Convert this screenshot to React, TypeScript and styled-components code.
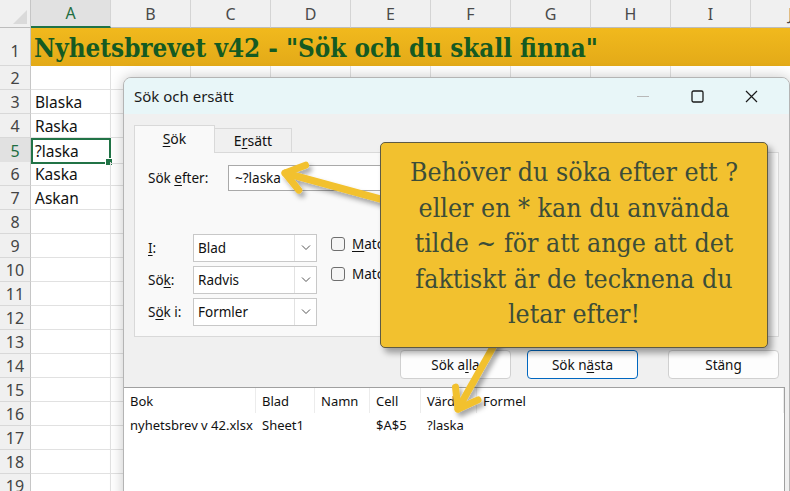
import React from 'react';
import styled, { createGlobalStyle, css } from 'styled-components';

const GlobalStyle = createGlobalStyle`
  html, body {
    margin: 0;
    padding: 0;
    background: #ffffff;
    overflow: hidden;
  }
  * { box-sizing: border-box; }
`;

const UI_FONT = `"Noto Sans", "Open Sans", Arial, sans-serif`;
const SLAB_FONT = `"DejaVu Serif", "Liberation Serif", serif`;

const Stage = styled.div`
  position: relative;
  width: 790px;
  height: 491px;
  overflow: hidden;
  font-family: ${UI_FONT};
  background: #fff;
`;

/* ---------- spreadsheet ---------- */

const Sheet = styled.div`
  display: flex;
  flex-direction: column;
  width: 831px;
`;

const SheetRow = styled.div<{ $h: number }>`
  display: grid;
  grid-template-columns: 31px repeat(10, 80px);
  height: ${(p) => p.$h}px;
`;

const Corner = styled.div`
  position: relative;
  background: #f0f0f0;
  border-right: 1px solid #c6c6c6;
  border-bottom: 1px solid #bdbdbd;
  &::after {
    content: '';
    position: absolute;
    right: 3px;
    bottom: 3px;
    border-style: solid;
    border-width: 0 0 14px 14px;
    border-color: transparent transparent #dadada transparent;
  }
`;

const ColHead = styled.div<{ $active?: boolean }>`
  display: flex;
  align-items: center;
  justify-content: center;
  font-size: 16px;
  color: #4a4a4a;
  background: #f0f0f0;
  border-right: 1px solid #d4d4d4;
  border-bottom: 1px solid #bdbdbd;
  ${(p) =>
    p.$active &&
    css`
      background: #e1e1e1;
      color: #1e6e42;
      border-bottom: 2px solid #217346;
    `}
`;

const RowHead = styled.div<{ $active?: boolean; $bottom?: boolean }>`
  display: flex;
  align-items: ${(p) => (p.$bottom ? 'flex-end' : 'center')};
  justify-content: center;
  padding-bottom: ${(p) => (p.$bottom ? '3px' : '0')};
  font-size: 16px;
  color: #444;
  background: ${(p) => (p.$active ? '#e1e1e1' : '#f0f0f0')};
  ${(p) => p.$active && 'color: #1e6e42;'}
  border-right: 1px solid #c6c6c6;
  border-bottom: 1px solid #d8d8d8;
`;

const Cell = styled.div<{ $selected?: boolean }>`
  position: relative;
  display: flex;
  align-items: center;
  padding-left: 4px;
  font-size: 15.5px;
  color: #111;
  border-right: 1px solid #e1e1e1;
  border-bottom: 1px solid #e1e1e1;
  ${(p) =>
    p.$selected &&
    css`
      border: 2px solid #217346;
      padding-left: 2px;
      &::after {
        content: '';
        position: absolute;
        right: -4px;
        bottom: -4px;
        width: 6px;
        height: 6px;
        background: #217346;
        border: 1px solid #fff;
      }
    `}
`;

const Banner = styled.div`
  grid-column: 2 / -1;
  display: flex;
  align-items: flex-end;
  padding: 0 0 3px 3px;
  background: linear-gradient(#f1b91d, #e3aa18);
  font-family: ${SLAB_FONT};
  font-weight: bold;
  font-stretch: condensed;
  font-size: 25.8px;
  color: #155a22;
  white-space: nowrap;
`;

/* ---------- dialog ---------- */

const Dialog = styled.div`
  position: absolute;
  left: 123px;
  top: 77px;
  width: 667px;
  height: 440px;
  display: flex;
  flex-direction: column;
  background: #f0f0f0;
  border: 1px solid #b4b4b4;
  border-radius: 8px 8px 0 0;
  box-shadow: 0 0 14px rgba(0, 0, 0, 0.22);
  overflow: hidden;
`;

const TitleBar = styled.div`
  height: 36px;
  flex: none;
  display: flex;
  align-items: center;
  padding: 0 11px 0 10px;
  background: #e8f6f8;
  font-size: 15px;
  color: #1a1a1a;
`;

const Title = styled.span`
  flex: 1;
`;

const WinButton = styled.div`
  width: 54px;
  height: 36px;
  display: flex;
  align-items: center;
  justify-content: center;
  color: #1a1a1a;
`;

const Body = styled.div`
  flex: 1;
  display: flex;
  flex-direction: column;
  padding: 11px 10px 0 10px;
`;

const Tabs = styled.div`
  display: flex;
  align-items: flex-end;
  height: 27px;
`;

const Tab = styled.div<{ $active?: boolean }>`
  display: flex;
  align-items: center;
  justify-content: center;
  font-size: 14px;
  color: #111;
  border: 1px solid #d9d9d9;
  border-bottom: none;
  ${(p) =>
    p.$active
      ? css`
          width: 81px;
          height: 28px;
          background: #f9f9f9;
          position: relative;
          z-index: 1;
          margin-bottom: -1px;
          padding-bottom: 2px;
        `
      : css`
          width: 77px;
          height: 24px;
          background: #f0f0f0;
          border-left: none;
        `}
`;

const U = styled.span`
  text-decoration: underline;
  text-underline-offset: 2px;
`;

const Panel = styled.div`
  height: 185px;
  padding: 12px 0 0 13px;
  background: #f9f9f9;
  border: 1px solid #d9d9d9;
  display: flex;
  flex-direction: column;
`;

const FindRow = styled.div`
  display: flex;
  align-items: center;
  height: 26px;
`;

const Label = styled.div<{ $w: number }>`
  width: ${(p) => p.$w}px;
  flex: none;
  font-size: 13.5px;
  color: #111;
`;

const TextInput = styled.div`
  width: 480px;
  height: 26px;
  display: flex;
  align-items: center;
  padding-left: 6px;
  background: #fff;
  border: 1px solid #a9a9a9;
  font-size: 13.5px;
  color: #111;
`;

const Options = styled.div`
  display: flex;
  gap: 14px;
  margin-top: 43px;
`;

const SelectCol = styled.div`
  display: flex;
  flex-direction: column;
  gap: 4px;
`;

const SelectRow = styled.div`
  display: flex;
  align-items: center;
  height: 28px;
`;

const Select = styled.div`
  width: 124px;
  height: 28px;
  display: flex;
  background: #fff;
  border: 1px solid #c8c8c8;
`;

const SelectValue = styled.div`
  flex: 1;
  display: flex;
  align-items: center;
  padding-left: 4px;
  font-size: 13.5px;
  color: #111;
`;

const SelectArrow = styled.div`
  width: 22px;
  display: flex;
  align-items: center;
  justify-content: center;
  border-left: 1px solid #e2e2e2;
`;

const CheckCol = styled.div`
  display: flex;
  flex-direction: column;
  gap: 12px;
  padding-top: 1px;
`;

const CheckRow = styled.div`
  display: flex;
  align-items: center;
  gap: 7px;
  font-size: 13.5px;
  color: #111;
  white-space: nowrap;
`;

const Box = styled.div`
  width: 14px;
  height: 14px;
  border: 1px solid #6e6e6e;
  border-radius: 3px;
  background: #f5f5f5;
`;

const ButtonRow = styled.div`
  display: flex;
  justify-content: flex-end;
  margin-top: 13px;
  height: 29px;
`;

const Button = styled.div<{ $focus?: boolean; $gap: number }>`
  width: 111px;
  height: 29px;
  margin-left: ${(p) => p.$gap}px;
  display: flex;
  align-items: center;
  justify-content: center;
  font-size: 13.5px;
  color: #111;
  background: #fdfdfd;
  border: 1px solid ${(p) => (p.$focus ? '#0067c0' : '#d0d0d0')};
  border-radius: 4px;
`;

const Results = styled.div`
  flex: 1;
  margin: 8px -6px 0 -11px;
  background: #fff;
  border-top: 1px solid #a0a0a0;
  border-right: 1px solid #a0a0a0;
  font-size: 13px;
  color: #111;
`;

const ResultRow = styled.div<{ $head?: boolean }>`
  display: grid;
  grid-template-columns: 133px 59px 55px 51px 56px 1fr;
  height: ${(p) => (p.$head ? 25 : 24)}px;
  align-items: center;
`;

const ResultCell = styled.div<{ $head?: boolean }>`
  height: 100%;
  display: flex;
  align-items: center;
  padding-left: 6px;
  white-space: nowrap;
  overflow: hidden;
  ${(p) => p.$head && 'border-right: 1px solid #ececec;'}
  &:first-child {
    padding-left: 7px;
  }
`;

/* ---------- annotation ---------- */

const ArrowLayer = styled.svg`
  position: absolute;
  left: 0;
  top: 0;
  pointer-events: none;
`;

const Callout = styled.div`
  position: absolute;
  left: 380px;
  top: 142px;
  width: 388px;
  height: 206px;
  display: flex;
  flex-direction: column;
  align-items: center;
  justify-content: center;
  padding: 0 0 4px;
  background: #f2c12f;
  border: 1px solid #5e5a44;
  border-radius: 5px;
  box-shadow: 4px 5px 6px rgba(0, 0, 0, 0.35);
  font-family: ${SLAB_FONT};
  font-stretch: condensed;
  font-size: 26.5px;
  line-height: 35.5px;
  color: #3c4d39;
  text-align: center;
  white-space: nowrap;
`;

const columns = ['A', 'B', 'C', 'D', 'E', 'F', 'G', 'H', 'I', 'J'];
const colA: Record<number, string> = { 3: 'Blaska', 4: 'Raska', 5: '?laska', 6: 'Kaska', 7: 'Askan' };
const calloutLines = [
  'Behöver du söka efter ett ?',
  'eller en * kan du använda',
  'tilde ~ för att ange att det',
  'faktiskt är de tecknena du',
  'letar efter!',
];

function Chevron() {
  return (
    <svg width="10" height="6" viewBox="0 0 10 6">
      <path d="M1 0.5 L5 4.5 L9 0.5" fill="none" stroke="#555" strokeWidth="1" />
    </svg>
  );
}

function Arrow({ x1, y1, x2, y2 }: { x1: number; y1: number; x2: number; y2: number }) {
  const a = Math.atan2(y1 - y2, x1 - x2);
  const len = 22;
  const spread = (36 * Math.PI) / 180;
  const w1 = [x2 + len * Math.cos(a - spread), y2 + len * Math.sin(a - spread)];
  const w2 = [x2 + len * Math.cos(a + spread), y2 + len * Math.sin(a + spread)];
  return (
    <g fill="none" stroke="#f2c12f" strokeWidth="7" strokeLinecap="round" strokeLinejoin="round">
      <path d={`M${x1} ${y1} L${x2} ${y2}`} />
      <path d={`M${w1[0]} ${w1[1]} L${x2} ${y2} L${w2[0]} ${w2[1]}`} />
    </g>
  );
}

export default function App() {
  const rows = Array.from({ length: 18 }, (_, i) => i + 2);
  return (
    <>
      <GlobalStyle />
      <Stage>
        <Sheet>
          <SheetRow $h={28}>
            <Corner />
            {columns.map((c) => (
              <ColHead key={c} $active={c === 'A'}>
                {c}
              </ColHead>
            ))}
          </SheetRow>
          <SheetRow $h={38}>
            <RowHead $bottom>1</RowHead>
            <Banner>Nyhetsbrevet v42 - "Sök och du skall finna"</Banner>
          </SheetRow>
          {rows.map((r) => (
            <SheetRow key={r} $h={24}>
              <RowHead $active={r === 5}>{r}</RowHead>
              {columns.map((c) => (
                <Cell key={c} $selected={c === 'A' && r === 5}>
                  {c === 'A' ? colA[r] : null}
                </Cell>
              ))}
            </SheetRow>
          ))}
        </Sheet>

        <Dialog>
          <TitleBar>
            <Title>Sök och ersätt</Title>
            <WinButton>
              <svg width="12" height="12" viewBox="0 0 12 12">
                <path d="M0 6.5 H12" stroke="#b8b8b8" strokeWidth="1" />
              </svg>
            </WinButton>
            <WinButton>
              <svg width="13" height="13" viewBox="0 0 13 13">
                <rect x="1" y="1" width="11" height="11" rx="1.5" fill="none" stroke="#1a1a1a" strokeWidth="1.3" />
              </svg>
            </WinButton>
            <WinButton>
              <svg width="13" height="13" viewBox="0 0 13 13">
                <path d="M1 1 L12 12 M12 1 L1 12" stroke="#1a1a1a" strokeWidth="1.2" />
              </svg>
            </WinButton>
          </TitleBar>
          <Body>
            <Tabs>
              <Tab $active>
                <U>S</U>ök
              </Tab>
              <Tab>
                E<U>r</U>sätt
              </Tab>
            </Tabs>
            <Panel>
              <FindRow>
                <Label $w={80}>
                  Sök <U>e</U>fter:
                </Label>
                <TextInput>~?laska</TextInput>
              </FindRow>
              <Options>
                <SelectCol>
                  {[
                    [<U key="u">I</U>, ':', 'Blad'],
                    ['Sö', <U key="u">k</U>, ':', 'Radvis'],
                    ['S', <U key="u">ö</U>, 'k i:', 'Formler'],
                  ].map((parts, i) => {
                    const value = parts[parts.length - 1];
                    return (
                      <SelectRow key={i}>
                        <Label $w={45}>{parts.slice(0, -1)}</Label>
                        <Select>
                          <SelectValue>{value}</SelectValue>
                          <SelectArrow>
                            <Chevron />
                          </SelectArrow>
                        </Select>
                      </SelectRow>
                    );
                  })}
                </SelectCol>
                <CheckCol>
                  <CheckRow>
                    <Box />
                    <span>
                      <U>M</U>atcha gemener/VERSALER
                    </span>
                  </CheckRow>
                  <CheckRow>
                    <Box />
                    <span>Matcha hela cellinnehållet</span>
                  </CheckRow>
                </CheckCol>
              </Options>
            </Panel>
            <ButtonRow>
              <Button $gap={0}>
                Sök a<U>l</U>la
              </Button>
              <Button $gap={16} $focus>
                Sök n<U>ä</U>sta
              </Button>
              <Button $gap={30}>Stäng</Button>
            </ButtonRow>
            <Results>
              <ResultRow $head>
                {['Bok', 'Blad', 'Namn', 'Cell', 'Värde', 'Formel'].map((h) => (
                  <ResultCell key={h} $head>
                    {h}
                  </ResultCell>
                ))}
              </ResultRow>
              <ResultRow>
                {['nyhetsbrev v 42.xlsx', 'Sheet1', '', '$A$5', '?laska', ''].map((v, i) => (
                  <ResultCell key={i}>{v}</ResultCell>
                ))}
              </ResultRow>
            </Results>
          </Body>
        </Dialog>

        <ArrowLayer width="790" height="491" viewBox="0 0 790 491">
          <defs>
            <filter id="arrowShadow" x="-20%" y="-20%" width="140%" height="140%">
              <feDropShadow dx="3" dy="4" stdDeviation="2.5" floodColor="#000" floodOpacity="0.35" />
            </filter>
          </defs>
          <g filter="url(#arrowShadow)">
            <Arrow x1={384} y1={200} x2={285} y2={173} />
            <Arrow x1={497} y1={340} x2={458} y2={409} />
          </g>
        </ArrowLayer>

        <Callout>
          {calloutLines.map((l) => (
            <div key={l}>{l}</div>
          ))}
        </Callout>
      </Stage>
    </>
  );
}
